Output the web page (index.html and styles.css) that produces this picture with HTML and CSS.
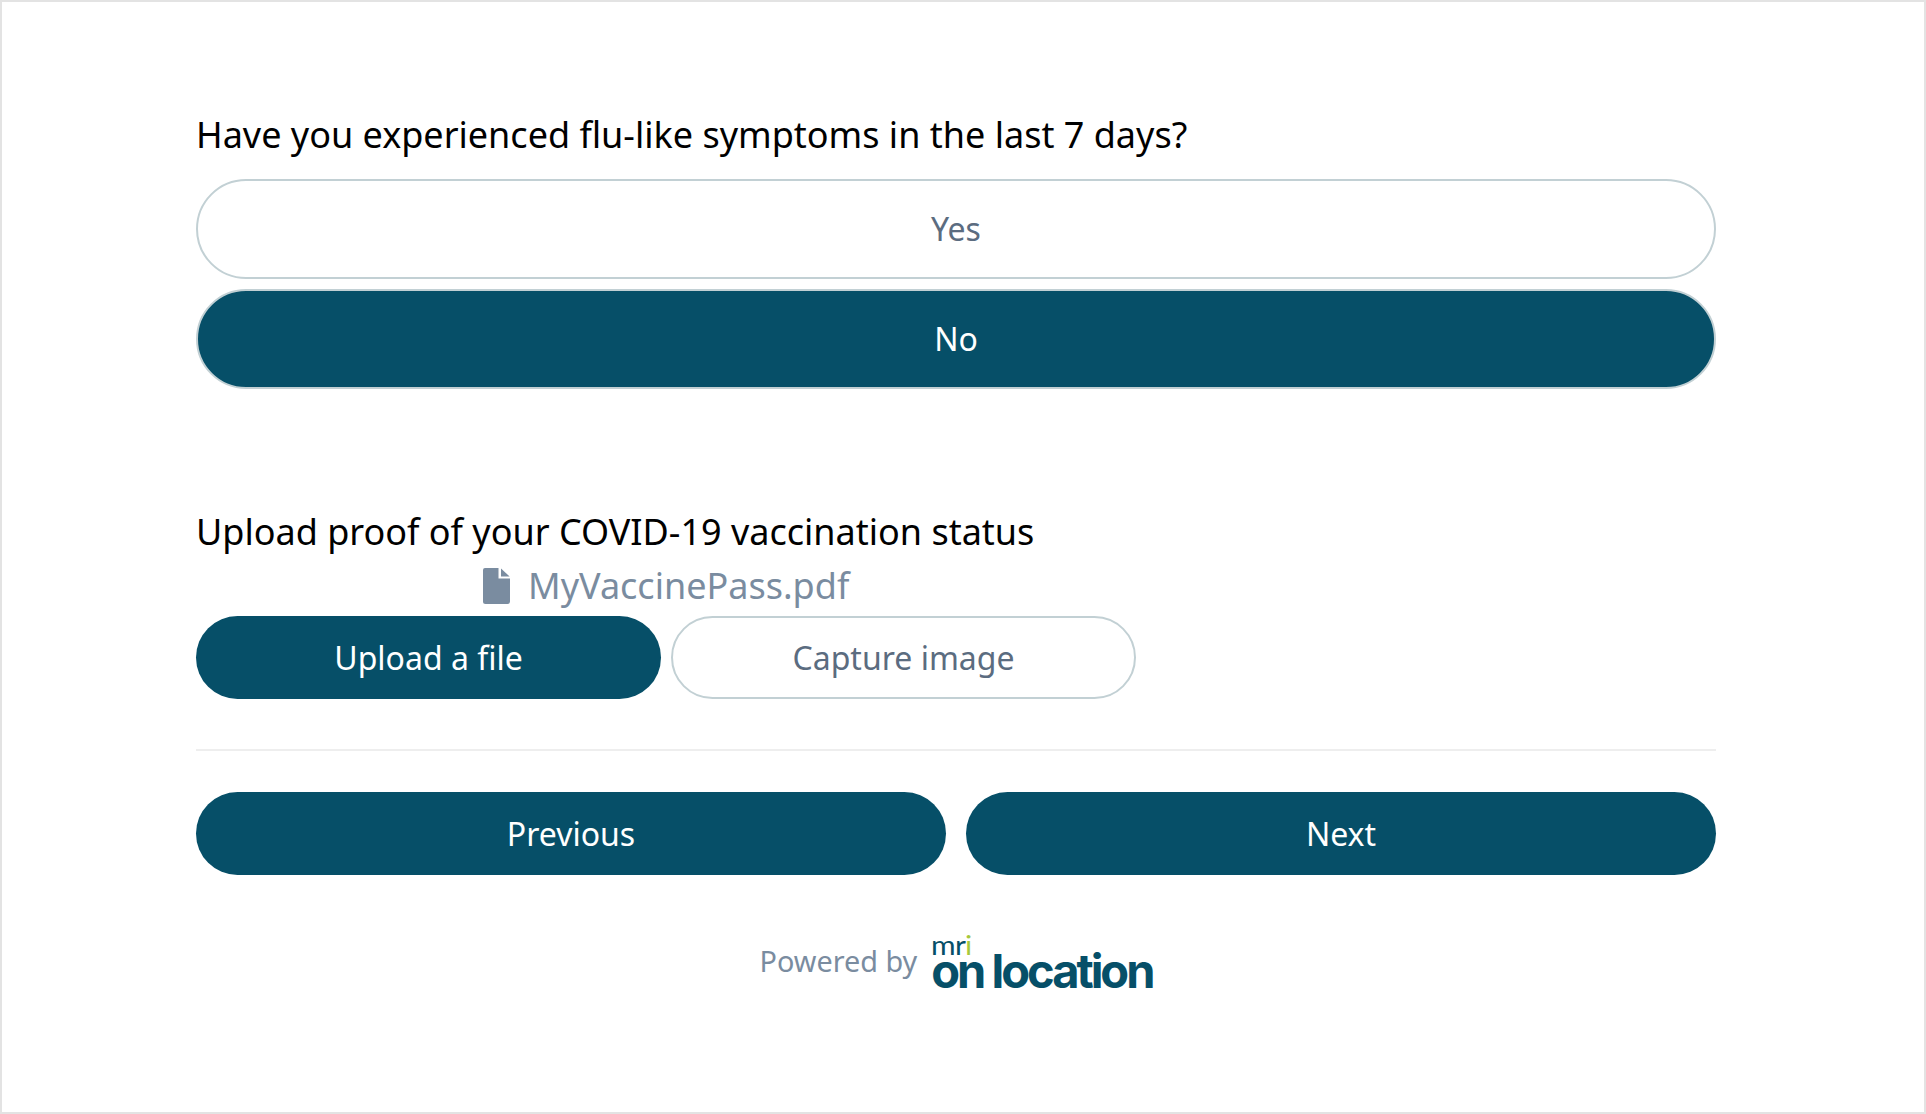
FILE: index.html
```html
<!DOCTYPE html>
<html lang="en">
<head>
<meta charset="utf-8">
<title>Questionnaire</title>
<link rel="stylesheet" href="styles.css">
</head>
<body>
<main class="frame">
  <section class="question q-flu">
    <h2 class="label">Have you experienced flu-like symptoms in the last 7 days?</h2>
    <div class="choices">
      <button class="pill pill-tall pill-outline">Yes</button>
      <button class="pill pill-tall pill-selected">No</button>
    </div>
  </section>
  <section class="question q-upload">
    <h2 class="label">Upload proof of your COVID-19 vaccination status</h2>
    <div class="file">
      <svg class="file-icon" viewBox="0 0 27 36" aria-hidden="true">
        <path d="M2 0H15.5V10.5H27V33.5A2.5 2.5 0 0 1 24.5 36H2.5A2.5 2.5 0 0 1 0 33.5V2A2 2 0 0 1 2 0Z"/>
        <path d="M18 0.6L26.6 8.5H18Z"/>
      </svg>
      <span class="file-name">MyVaccinePass.pdf</span>
    </div>
    <div class="upload-actions">
      <button class="pill pill-short pill-solid">Upload a file</button>
      <button class="pill pill-short pill-outline">Capture image</button>
    </div>
  </section>
  <hr class="divider">
  <nav class="nav">
    <button class="pill pill-short pill-solid">Previous</button>
    <button class="pill pill-short pill-solid">Next</button>
  </nav>
  <footer class="powered">
    <span class="powered-text">Powered by</span>
    <span class="logo">
      <span class="logo-mri">mr<span class="logo-i">i</span></span>
      <span class="logo-name">on location</span>
    </span>
  </footer>
</main>
</body>
</html>
```
FILE: styles.css
```css
* { box-sizing: border-box; }
html, body { margin: 0; height: 100%; background: #fff; }
body { font-family: "Noto Sans", "Open Sans", sans-serif; }
.frame {
  width: 1926px;
  height: 1114px;
  border: 2px solid #e3e3e3;
  padding: 110px 208px 0 194px;
  display: flex;
  flex-direction: column;
}
.label {
  margin: 0;
  font-size: 36px;
  font-weight: 400;
  line-height: 46px;
  color: #000;
}
.choices {
  margin-top: 21px;
  display: flex;
  flex-direction: column;
  gap: 10px;
}
.pill {
  display: block;
  border-radius: 50px;
  font-family: inherit;
  font-size: 32px;
  padding: 0;
  cursor: pointer;
}
.pill-tall { height: 100px; width: 100%; padding-bottom: 2px; }
.pill-short { height: 83px; width: 465px; border-radius: 42px; }
.pill-outline { background: #fff; border: 2px solid #c2d0d4; color: #5b6c80; }
.pill-selected { background: #064f68; border: 2px solid #c2d0d4; color: #fff; }
.pill-solid { background: #064f68; border: 0; color: #fff; }
.q-upload { margin-top: 120px; }
.file {
  margin-top: 9px;
  margin-left: 287px;
  height: 43px;
  display: flex;
  align-items: center;
  gap: 18px;
}
.file-icon { width: 27px; height: 36px; fill: #7a8ca0; flex: none; }
.file-name { font-size: 36px; line-height: 43px; color: #7a8ca0; }
.upload-actions { margin-top: 9px; display: flex; gap: 10px; }
.divider {
  width: 100%;
  margin: 50px 0 0;
  border: 0;
  border-top: 2px solid #eeeeee;
}
.nav { margin-top: 41px; display: flex; gap: 20px; }
.nav .pill { flex: 1; width: auto; }
.powered {
  margin-top: 62px;
  display: flex;
  justify-content: center;
  align-items: flex-end;
  gap: 14px;
}
.powered-text { font-size: 28.8px; line-height: 40px; color: #7a8ca0; margin-bottom: 8px; }
.logo { display: flex; flex-direction: column; color: #064f68; }
.logo-mri {
  font-family: "Lato", sans-serif;
  font-weight: 400;
  font-size: 26px;
  line-height: 16px;
  letter-spacing: -0.6px;
  color: #064f68;
  transform: scaleX(1.15);
  transform-origin: left center;
}
.logo-i { color: #a6c83c; }
.logo-name {
  font-family: "Inter", "Roboto", sans-serif;
  font-weight: 700;
  font-size: 47px;
  line-height: 36px;
  letter-spacing: -3px;
  white-space: nowrap;
}
```
